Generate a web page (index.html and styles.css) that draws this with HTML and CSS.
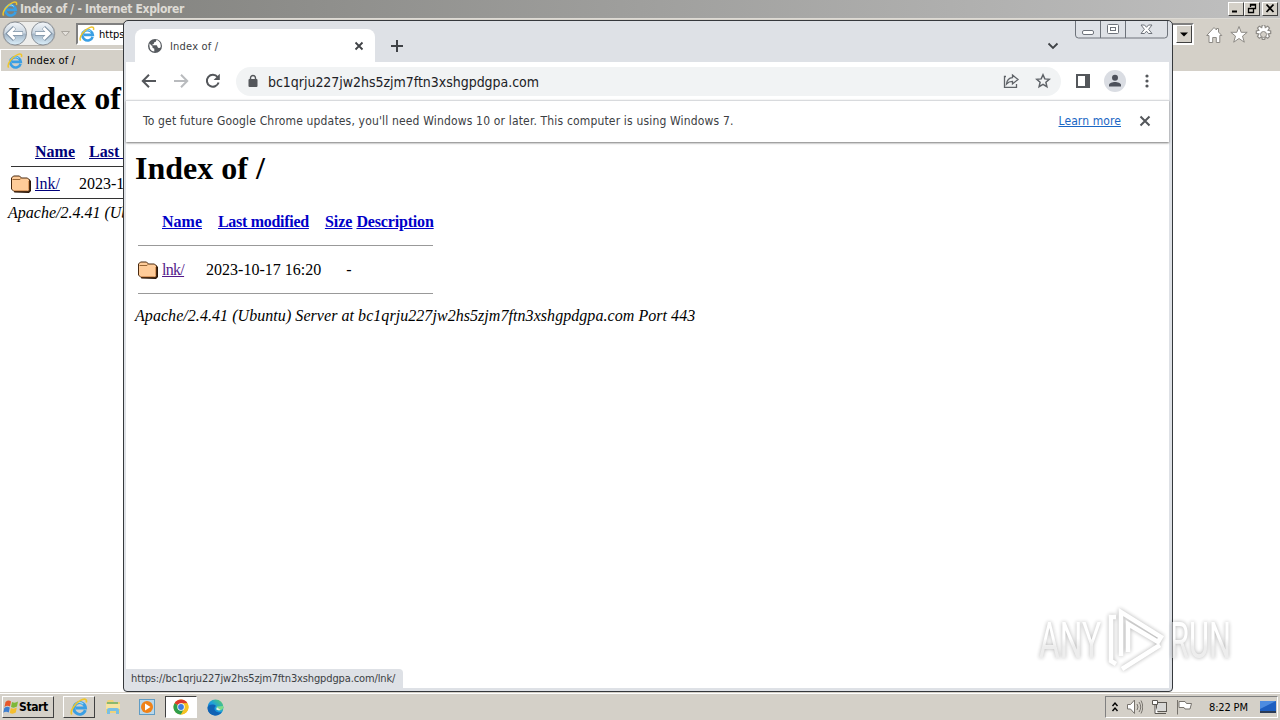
FILE: index.html
```html
<!DOCTYPE html>
<html lang="en">
<head>
<meta charset="utf-8">
<title>Index of /</title>
<link rel="stylesheet" href="styles.css">
</head>
<body>
<svg class="defs" width="0" height="0">
  <defs>
    <linearGradient id="ball" x1="0" y1="0" x2="0" y2="1"><stop offset="0" stop-color="#f4f7fa"/><stop offset=".48" stop-color="#c9d5e0"/><stop offset=".52" stop-color="#a3b5c6"/><stop offset="1" stop-color="#dcf0fb"/></linearGradient>
    <linearGradient id="edgeg" x1="0" y1="1" x2="1" y2="0"><stop offset="0" stop-color="#0c59a4"/><stop offset=".5" stop-color="#1b9de2"/><stop offset="1" stop-color="#5fd35a"/></linearGradient>
    <linearGradient id="markg" x1="0" y1="0" x2="0" y2="1"><stop offset=".45" stop-color="#fff"/><stop offset=".6" stop-color="#ececec"/></linearGradient>
    <symbol id="ie" viewBox="0 0 16 16">
      <path d="M13.600 10.800A5.200 5.200 0 1 1 13.800 8.900H5" fill="none" stroke="#3a9fe4" stroke-width="2.600"/>
      <path d="M4.200 6.600a4.600 4.600 0 0 1 7.600-1.200" fill="none" stroke="#9bdcfa" stroke-width="1"/>
      <path d="M1.600 14.600C-.6 11.400 5.400 3.400 11 1.400c3-1 4.200.2 3.400 2.600" fill="none" stroke="#eec52d" stroke-width="1.500"/>
    </symbol>
    <symbol id="folder" viewBox="0 0 20 20">
      <path d="M3 18.500 18 19l2-2V7l-2-2" fill="#2b1608"/>
      <path d="M.5 4 2.500 2h6l2 2h6l2 2v10L17 17.500H3L.5 15z" fill="#ffcc99" stroke="#4a2a10"/>
      <path d="M1.500 5.500H9l1.500-1.500" fill="none" stroke="#996633"/>
      <path d="M3 16.500h13.500l1-1V7" fill="none" stroke="#dc9a60"/>
    </symbol>
  </defs>
</svg>
<div class="desktop">
  <section class="ie">
    <div class="ie-title">
      <svg width="16" height="16"><use href="#ie"/></svg>
      <span class="ie-title-text">Index of / - Internet Explorer</span>
      <div class="ie-buttons">
        <span class="wb"><svg width="14" height="11"><path d="M3 8.500h5" stroke="#000" stroke-width="2"/></svg></span>
        <span class="wb"><svg width="14" height="11"><path d="M5.500 4V1.500h5v4H9M5 2h6M3.500 5.500h5v4h-5zM3 5.500h6" fill="none" stroke="#000" stroke-width="1.300"/></svg></span>
        <span class="wb gap"><svg width="14" height="11"><path d="M3.500 1.500l7 7.500M10.500 1.500l-7 7.500" stroke="#000" stroke-width="1.800"/></svg></span>
      </div>
    </div>
    <div class="ie-nav">
      <svg class="balls" width="74" height="28">
        <path d="M15 1.500h28a12 12 0 0 1 0 24H15a12 12 0 0 1 0-24z" fill="#ededeb" stroke="#b5b1aa"/>
        <circle cx="15" cy="13.500" r="11.500" fill="url(#ball)" stroke="#8c9299"/><circle cx="43" cy="13.500" r="11.500" fill="url(#ball)" stroke="#8c9299"/>
        <path d="M23 13.500H9M14.500 7.500l-6 6 6 6" fill="none" stroke="#7f92a5" stroke-width="4.400"/><path d="M22.500 13.500H9M14.500 8l-5.500 5.500 5.500 5.500" fill="none" stroke="#fff" stroke-width="3"/>
        <path d="M35 13.500h14M43.500 7.500l6 6-6 6" fill="none" stroke="#7f92a5" stroke-width="4.400"/><path d="M35.500 13.500H49M43.500 8l5.500 5.500-5.500 5.500" fill="none" stroke="#fff" stroke-width="3"/>
        <path d="M61.500 11.500h8l-4 4.500z" fill="#e4e1dc" stroke="#aaa69f"/>
      </svg>
      <div class="ie-address"><svg width="16" height="16"><use href="#ie"/></svg><span>https</span>
        <span class="drop"><svg width="14" height="16"><path d="M3 6.500h8l-4 4z" fill="#000"/></svg></span></div>
      <svg class="ie-tools" width="70" height="20" fill="#fff" stroke="#8d8a85">
        <path d="M.7 10.500 8 2.500l2.500 2.500V3.500h2V7l3.300 3.500h-2V17.500h-3.500v-5H6.700v5H3v-7z"/>
        <path d="M33 1.500 35.200 7.300h6l-4.700 3.800 1.800 6.100-5.300-3.700-5.300 3.700 1.800-6.100-4.700-3.800h6z"/>
        <path d="M56.500 1.500h2l.5 2.200 2-1.200 1.500 1.500-1.200 2 2.200.5v2l-2.200.5 1.200 2-1.500 1.500-2-1.200-.5 2.200h-2l-.5-2.200-2 1.200-1.500-1.500 1.200-2-2.200-.5v-2l2.200-.5-1.200-2L54 2.500l2 1.200z" transform="translate(-11.500 -1.800) scale(1.200)"/><circle cx="57.500" cy="9.500" r="3" fill="#d4d0c8"/>
      </svg>
    </div>
    <div class="ie-tabs"><div class="ie-tab"><svg width="16" height="16"><use href="#ie"/></svg><span>Index of /</span></div></div>
    <div class="ie-page">
      <h1>Index of</h1>
      <div class="ie-head"><a>Name</a><a>Last&nbsp;</a></div>
      <div class="ie-row"><svg width="20" height="20"><use href="#folder"/></svg><a>lnk/</a><span>2023-1</span></div>
      <address>Apache/2.4.41 (Ub</address>
    </div>
  </section>

  <section class="chrome">
    <div class="tabstrip">
      <div class="tab">
        <svg width="16" height="16"><circle cx="8" cy="8" r="7" fill="#565a5f"/><path d="M2.500 5.500 5.500 8.500v1.200l1.800 1v2.800C4 13.500 2 10.500 2.500 5.500zM9.500 1.800c-.2 2.700-2.200 2-2.600 3.300.5 1.600-1.900 1-1.500 2.200h4.200c1 .5.400 1.700 1.600 2.400.900.500 1.900.3 2.500-.6.500-4-1.700-6.300-4.200-7.300z" fill="#fff"/></svg>
        <span class="tab-text">Index of /</span>
        <svg width="10" height="10"><path d="M1.500 1.500l7 7M8.500 1.500l-7 7" stroke="#3f4246" stroke-width="1.800"/></svg>
      </div>
      <svg class="plus" width="14" height="14"><path d="M7 1v12M1 7h12" stroke="#3f4246" stroke-width="2"/></svg>
      <svg class="chev" width="12" height="8"><path d="M1.500 1.500 6 6l4.500-4.500" fill="none" stroke="#3f4246" stroke-width="1.800"/></svg>
      <svg class="caption" width="94" height="18" fill="none" stroke="#6e737b">
        <path d="M.5 0v14q0 3 3 3h86q3 0 3-3V0M25.500 0v17M50.500 0v17"/>
        <rect x="7.500" y="9.500" width="11" height="4" rx="1.500" fill="#fff"/><rect x="32.500" y="3.500" width="11" height="9" rx="1" fill="#fff"/><rect x="35.500" y="6.500" width="5" height="3"/>
        <path d="M66 4h3.500l2 2.300 2-2.300H77l-3.400 4.300 3.400 4.200h-3.500l-2-2.300-2 2.300H66l3.400-4.200z" fill="#fff"/>
      </svg>
    </div>
    <div class="toolbar">
      <svg width="16" height="16"><path d="M15 8H2M8 1.800 1.800 8 8 14.200" fill="none" stroke="#54575b" stroke-width="2"/></svg>
      <svg width="16" height="16"><path d="M1 8h13M8 1.800 14.200 8 8 14.200" fill="none" stroke="#b9bbbe" stroke-width="2"/></svg>
      <svg width="16" height="16"><path d="M13.600 9.500A6 6 0 1 1 12.600 4" fill="none" stroke="#54575b" stroke-width="2"/><path d="M14.800.8V7H8.600z" fill="#54575b"/></svg>
      <div class="omni">
        <svg width="10" height="14"><path d="M2.500 6V4a2.500 2.500 0 0 1 5 0v2" fill="none" stroke="#54575b" stroke-width="1.400"/><rect x=".5" y="5" width="9" height="8" rx="1" fill="#54575b"/></svg>
        <span class="url">bc1qrju227jw2hs5zjm7ftn3xshgpdgpa.com</span>
        <svg width="18" height="16" fill="none" stroke="#5f6368" stroke-width="1.300"><path d="M4 3.500H2.500v10.800h12V11"/><path d="M10.500 2 16 6.500 10.500 11V8.300C8 8.300 6.200 9 4.500 11c.4-3.500 2.500-6 6-6.300z"/></svg>
        <svg class="star" width="16" height="16"><path d="M8 1.800l1.800 4.100 4.500.4-3.400 3 1 4.400L8 11.400l-3.900 2.300 1-4.400-3.400-3 4.500-.4z" fill="none" stroke="#5f6368" stroke-width="1.500"/></svg>
      </div>
      <svg class="side" width="14" height="14"><rect x="1" y="1" width="12" height="12" fill="#fff" stroke="#54575b" stroke-width="2"/><path d="M9 0h5v14H9z" fill="#54575b"/></svg>
      <svg class="ava" width="22" height="22"><circle cx="11" cy="11" r="11" fill="#dadde3"/><circle cx="11" cy="7.800" r="3" fill="#4d515b"/><path d="M5 16.500v-1.500c0-2 3.500-3 6-3s6 1 6 3v1.500z" fill="#4d515b"/></svg>
      <svg class="dots" width="4" height="16"><g fill="#54575b"><circle cx="2" cy="3" r="1.600"/><circle cx="2" cy="8" r="1.600"/><circle cx="2" cy="13" r="1.600"/></g></svg>
    </div>
    <div class="infobar">
      <span class="info">To get future Google Chrome updates, you'll need Windows 10 or later. This computer is using Windows 7.</span>
      <a class="learn">Learn more</a>
      <svg width="12" height="12"><path d="M1.500 1.500l9 9M10.500 1.500l-9 9" stroke="#54575b" stroke-width="2"/></svg>
    </div>
    <div class="page">
      <h1>Index of /</h1>
      <div class="listing">
        <div class="head"><a>Name</a><a>Last modified</a><a>Size</a><a>Description</a></div>
        <div class="row"><svg width="20" height="20"><use href="#folder"/></svg><a>lnk/</a><span>2023-10-17 16:20</span><span>-</span></div>
      </div>
      <address>Apache/2.4.41 (Ubuntu) Server at bc1qrju227jw2hs5zjm7ftn3xshgpdgpa.com Port 443</address>
      <div class="status"><span>https://bc1qrju227jw2hs5zjm7ftn3xshgpdgpa.com/lnk/</span></div>
    </div>
  </section>

  <footer class="taskbar">
    <div class="start"><svg width="16" height="16"><path d="M2.500 3q3-2.500 5.500-.5L7 7.500Q4 6 1.500 8z" fill="#e8582b"/><path d="M9 3q3 1.500 6-.5l-1 5q-3 2-6 .5z" fill="#7db83a"/><path d="M1.300 9Q4 7 6.800 8.500l-1 5q-3-1.800-5.500.2z" fill="#3f7fd0"/><path d="M7.800 9q3 1.500 6-.4l-1 5q-3 2-6 .4z" fill="#f5be2e"/></svg><span>Start</span></div>
    <div class="task raised"><svg width="18" height="18"><use href="#ie"/></svg></div>
    <div class="task"><svg width="16" height="18"><path d="M1 5l2-3h5l1 2h6v11H1z" fill="#efd27a"/><path d="M2 4h11v2H2z" fill="#8bb86d"/><path d="M1 6h14v5H1z" fill="#f6e3a0"/><path d="M2 16v-4q0-2 2-2h8q2 0 2 2v4h-3v-3H5v3z" fill="#79bfe3"/></svg></div>
    <div class="task"><svg width="16" height="16"><rect x=".5" y=".5" width="15" height="15" fill="#b9d7ea" stroke="#609cc4"/><circle cx="8" cy="8" r="6" fill="#f08218"/><path d="M6 4.500 11.500 8 6 11.500z" fill="#fff"/></svg></div>
    <div class="task pressed"><svg width="16" height="16"><circle cx="8" cy="8" r="7.500" fill="#f5c324"/><path d="M8 8 1.500 4.250A7.500 7.500 0 0 1 14.500 4.250L8 4.500z" fill="#dd3a2c"/><path d="M8 8h0L1.500 4.250A7.500 7.500 0 0 0 8 15.500l3-5.200z" fill="#2f9e4b"/><path d="M8 4.500h6.700a7.500 7.500 0 0 1 .1.200A7.500 7.500 0 0 1 8 15.500l3.200-6z" fill="#f5c324"/><circle cx="8" cy="8" r="3.700" fill="#fff"/><circle cx="8" cy="8" r="2.900" fill="#3e7de0"/></svg></div>
    <div class="task"><svg width="17" height="17"><circle cx="8.500" cy="8.500" r="8" fill="url(#edgeg)"/><path d="M.6 9C1.500 5 7 4.800 9 7 7 8 7 10.500 8.500 12c2 2 5 1.500 6.500.8-2 3-5 4-7.500 3.600C3.500 15.800.5 13 .6 9z" fill="#1162b4"/><path d="M9.800 7.500c.4 1.200-.6 1.600-.4 2.700.6 1.200 3 1.500 5.200.6l1.800-1.800q0-1.500-.5-2z" fill="#7ddc8a"/><path d="M9.800 8.300c.2 1-.6 1.300-.4 2 .6 1 2.500 1.200 4.200.8z" fill="#e8efe6"/></svg></div>
    <div class="tray">
      <svg width="8" height="12"><path d="M1.500 5 4 2l2.500 3M1.500 10 4 7l2.500 3" fill="none" stroke="#000" stroke-width="1.400"/></svg>
      <svg width="16" height="16" fill="#fff" stroke="#77736d"><path d="M.5 5.500h3l4-4.500v13.500l-4-4.500h-3z"/><path d="M10 5q2 3 0 6M12 3q3.500 5 0 10M14 1.500q3.500 6.500 0 13" fill="none"/></svg>
      <svg width="17" height="17" fill="#fff" stroke="#5a5752"><rect x="5.500" y="3.500" width="10" height="9" fill="#d8d8d6"/><path d="M7 14.500h8M1.500 1.500h5v4h-5zM4 5.500v9h3"/></svg>
      <svg width="17" height="16" fill="#fff" stroke="#77736d"><path d="M1.500 1v14.500M3 2.500h6l1.500 2h5L14 10H9L8 8.500H3z"/></svg>
      <span class="clock">8:22 PM</span>
      <svg width="16" height="14"><path d="M0 1h16v10H0z" fill="#1e5fc0"/><path d="M0 1h16L0 9z" fill="#4d8ce0"/><path d="M0 11h16v2H0z" fill="#2b3b55"/></svg>
    </div>
  </footer>

  <svg class="mark" width="210" height="80">
    <g class="mark-shapes">
      <text x="9" y="58" textLength="62" lengthAdjust="spacingAndGlyphs">ANY</text>
      <text x="140" y="58" textLength="61" lengthAdjust="spacingAndGlyphs">RUN</text>
      <path d="M86 17h-5v44l5 3M91 56V12l40 25-3 5-30-18v28M92 69l38-24"/>
    </g>
  </svg>
</div>
</body>
</html>
```
FILE: styles.css
```css
* { box-sizing: border-box; }
body { margin: 0; }
svg { display: block; flex: none; }
.defs { position: absolute; }
.desktop { position: relative; width: 1280px; height: 720px; overflow: hidden; background: #fff; font: 11px "DejaVu Sans Condensed", "DejaVu Sans", sans-serif; color: #000; white-space: nowrap; }
span, a { white-space: nowrap; }

.ie { height: 692px; display: flex; flex-direction: column; overflow: hidden; }
.ie-title { height: 18px; display: flex; align-items: center; padding: 0 2px; background: linear-gradient(90deg, #7e7e7a, #c0c0c0); }
.ie-title-text { margin-left: 2px; color: #dedbd5; font-size: 12px; font-weight: bold; letter-spacing: -.33px; }
.ie-buttons { margin-left: auto; display: flex; }
.wb { width: 16px; height: 14px; background: #d4d0c8; border: 1px solid; border-color: #fff #404040 #404040 #fff; }
.wb.gap { margin-left: 2px; }
.ie-nav { height: 31px; background: #d4d0c8; display: flex; align-items: center; border-top: 1px solid #dedbd5; }
.ie-address { margin-left: 2px; width: 1118px; height: 22px; display: flex; align-items: center; background: #fff; border: 2px solid; border-color: #808080 #fff #fff #808080; padding-left: 1px; }
.ie-address > span { margin-left: 4px; }
.ie-address > .drop { margin-left: auto; width: 16px; height: 18px; background: #d4d0c8; border: 1px solid; border-color: #fff #404040 #404040 #fff; }
.ie-tools { margin: 2px 0 0 12px; }
.ie-tabs { height: 22px; background: #d4d0c8; }
.ie-tab { height: 22px; width: 300px; display: flex; align-items: center; border-top: 1px solid #fff; border-left: 1px solid #fff; padding-left: 6px; }
.ie-tab span { margin-left: 4px; letter-spacing: .2px; }
.ie-page { width: 124px; overflow: hidden; padding: 9px 0 9px 8px; font: 16px "Liberation Serif", serif; }
h1 { margin: 0; font: bold 32px/36px "Liberation Serif", serif; }
.ie-head { margin: 22px 0 0 3px; height: 29px; padding-left: 24px; display: flex; gap: 14px; line-height: 27px; font-weight: bold; border-bottom: 1px solid #333; }
a { text-decoration: underline; color: #0000c8; }
.ie-head a, .ie-row a { color: #00007a; }
.ie-row { margin-left: 3px; height: 32px; display: flex; align-items: center; border-bottom: 1px solid #333; padding-top: 2px; }
.ie-row a { margin-left: 4px; }
.ie-row span { margin-left: 19px; }
address { font: italic 16px/18px "Liberation Serif", serif; }
.ie-page address { margin-top: 5px; }

.chrome { position: absolute; left: 123px; top: 20px; width: 1050px; height: 672px; border: 1px solid #35383c; border-radius: 5px 5px 4px 4px; background: #dee1e6; padding: 0 3px 3px 2px; display: flex; flex-direction: column; overflow: hidden; }
.tabstrip { height: 41px; display: flex; position: relative; }
.tab { margin: 8px 0 0 9px; width: 240px; height: 33px; background: #fff; border-radius: 8px 8px 0 0; display: flex; align-items: center; padding: 0 11px 0 12px; }
.tab-text { margin-left: 7px; margin-right: auto; padding-top: 1px; color: #3c4043; letter-spacing: .2px; }
.plus { margin: 18px 0 0 15px; }
.chev { margin: 21px 110px 0 auto; }
.caption { position: absolute; right: 0; top: 0; }
.toolbar { height: 38px; background: #fff; display: flex; align-items: center; padding: 0 14px 0 15px; gap: 16px; }
.omni { margin-left: -1px; width: 825px; height: 29px; border-radius: 15px; background: #f1f3f4; display: flex; align-items: center; padding: 0 10px 0 12px; }
.url { margin: 0 auto 0 10px; padding-top: 1px; font-size: 14px; letter-spacing: -.03px; color: #202124; }
.star { margin-left: 15px; }
.side { margin-left: -1px; }
.ava { margin-left: -2px; }
.dots { margin-left: 3px; }
.infobar { height: 42px; background: #fff; border-top: 1px solid #d8dadd; display: flex; align-items: center; padding: 0 18px 2px 17px; font-size: 12px; color: #3c4043; position: relative; z-index: 1; box-shadow: 0 1px 2px #777; }
.info { letter-spacing: .165px; }
.learn { margin: 0 18px 0 auto; color: #1a66c4; letter-spacing: .1px; }
.page { flex: 1; background: #fff; padding: 8px 9px 0; font: 16px "Liberation Serif", serif; position: relative; z-index: 0; }
.listing { margin: 25px 0 0 3px; width: 295px; }
.head { height: 35px; display: flex; padding-left: 24px; line-height: 22px; font-weight: bold; border-bottom: 1px solid #999; }
.head a:nth-child(2) { margin-left: 16px; letter-spacing: -.29px; }
.head a:nth-child(3) { margin-left: 16px; }
.head a:nth-child(4) { margin-left: 4px; letter-spacing: -.17px; }
.row { height: 48px; display: flex; align-items: center; border-bottom: 1px solid #999; }
.row a { margin-left: 4px; color: #551a8b; letter-spacing: -.7px; }
.row span:nth-of-type(1) { margin-left: 22px; }
.row span:nth-of-type(2) { margin-left: 25px; }
.page address { margin-top: 13px; letter-spacing: .055px; }
.status { position: absolute; left: 0; bottom: 0; width: 277px; height: 19px; background: #dee1e6; border-top-right-radius: 4px; display: flex; align-items: center; padding-left: 5px; font: 11px "DejaVu Sans Condensed", "DejaVu Sans", sans-serif; letter-spacing: -.13px; color: #3c4043; }

.taskbar { height: 28px; background: #d4d0c8; border-top: 1px solid #d4d0c8; box-shadow: inset 0 1px #fff; display: flex; align-items: center; padding: 1px 2px 0; }
.start { width: 52px; height: 22px; border: 1px solid; border-color: #fff #404040 #404040 #fff; display: flex; align-items: center; font-weight: bold; font-size: 12px; }
.start span { letter-spacing: -.4px; }
.task { width: 32px; height: 22px; margin-right: 2px; display: flex; align-items: center; justify-content: center; }
.raised { margin-left: 9px; border: 1px solid; border-color: #fff #404040 #404040 #fff; }
.pressed { border: 1px solid; border-color: #404040 #fff #fff #404040; background: #fff; }
.tray { margin-left: auto; width: 173px; height: 22px; border: 1px solid; border-color: #808080 #fff #fff #808080; display: flex; align-items: center; padding-left: 5px; gap: 8px; }
.clock { margin: 0 4px 0 8px; letter-spacing: -.15px; }

.mark { position: absolute; left: 1030px; top: 600px; opacity: .9; }
.mark text { font: 400 50px Roboto, sans-serif; fill: url(#markg); stroke: none; }
.mark path { fill: none; stroke: #fff; stroke-width: 4.5px; }
.mark-shapes { filter: drop-shadow(0 0 2px rgba(0,0,0,.34)); }
```
